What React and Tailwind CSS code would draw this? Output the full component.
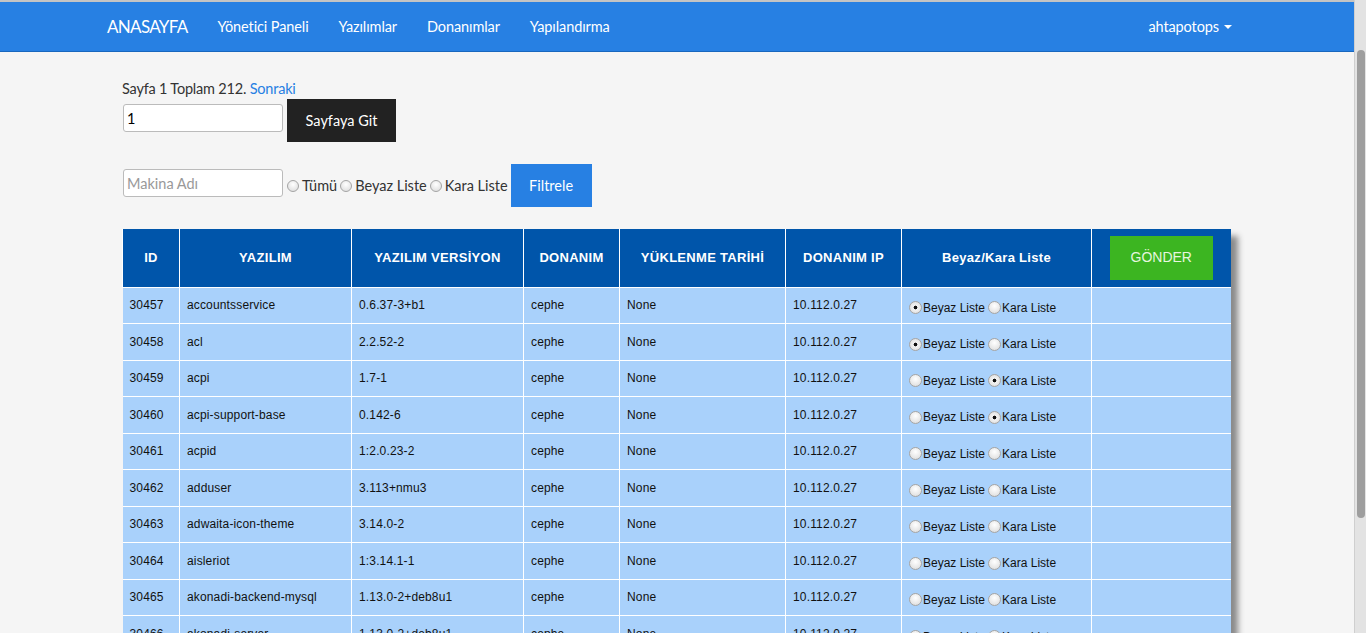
import React from "react";

const ROWS = [
  ["30457", "accountsservice", "0.6.37-3+b1", "beyaz"],
  ["30458", "acl", "2.2.52-2", "beyaz"],
  ["30459", "acpi", "1.7-1", "kara"],
  ["30460", "acpi-support-base", "0.142-6", "kara"],
  ["30461", "acpid", "1:2.0.23-2", ""],
  ["30462", "adduser", "3.113+nmu3", ""],
  ["30463", "adwaita-icon-theme", "3.14.0-2", ""],
  ["30464", "aisleriot", "1:3.14.1-1", ""],
  ["30465", "akonadi-backend-mysql", "1.13.0-2+deb8u1", ""],
  ["30466", "akonadi-server", "1.13.0-2+deb8u1", ""],
];

const HEADERS = [
  ["ID", "w-[57px]"],
  ["YAZILIM", "w-[172px]"],
  ["YAZILIM VERSİYON", "w-[172px]"],
  ["DONANIM", "w-[96px]"],
  ["YÜKLENME TARİHİ", "w-[166px]"],
  ["DONANIM IP", "w-[116px]"],
  ["Beyaz/Kara Liste", "w-[190px]"],
];

function Radio({ checked, name, size = "h-[12px] w-[12px]" }) {
  return (
    <input
      type="radio"
      name={name}
      defaultChecked={checked}
      className={`${size} m-0 shrink-0 appearance-none rounded-full border border-[#a4a4a4] bg-[radial-gradient(circle_at_50%_35%,#ffffff,#d9d9d9)] checked:bg-[radial-gradient(circle,#111_0_1.6px,#f4f4f4_2.2px,#d6d6d6_100%)]`}
    />
  );
}

function NavBar() {
  return (
    <nav className="h-[52px] border-t-2 border-b border-t-[#c4c4c4] border-b-[#1967be] bg-[#2780e3] font-['Lato',sans-serif] text-white">
      <div className="mx-auto flex h-full w-[1170px] items-center justify-between px-[15px]">
        <div className="flex items-center tracking-[-0.1px]">
          <span className="pr-[15px] text-[17px] tracking-[-0.7px]">ANASAYFA</span>
          <a className="px-[15px] text-[14.5px]">Yönetici Paneli</a>
          <a className="px-[15px] text-[14.5px]">Yazılımlar</a>
          <a className="px-[15px] text-[14.5px]">Donanımlar</a>
          <a className="px-[15px] text-[14.5px]">Yapılandırma</a>
        </div>
        <a className="flex items-center gap-[5px] px-[15px] text-[14.5px] tracking-[-0.1px]">
          ahtapotops
          <span className="h-0 w-0 border-x-[4px] border-t-[4px] border-x-transparent border-t-white" />
        </a>
      </div>
    </nav>
  );
}

function Controls() {
  return (
    <div className="font-['Lato',sans-serif] text-[14.5px] text-[#333]">
      <p className="leading-[21px] tracking-[-0.2px]">
        Sayfa 1 Toplam 212. <a className="text-[#2780e3]">Sonraki</a>
      </p>
      <div className="flex items-start gap-[4px]">
        <input
          defaultValue="1"
          className="mt-[5px] ml-[1px] h-[28px] w-[160px] rounded-[3px] border border-[#bbb] bg-white px-[3px] text-[14.5px] text-black outline-none"
        />
        <button className="h-[43px] w-[109px] bg-[#222] text-[14.5px] text-white">Sayfaya Git</button>
      </div>
      <div className="mt-[22px] flex items-start">
        <input
          placeholder="Makina Adı"
          className="mt-[5px] ml-[1px] h-[28px] w-[160px] rounded-[3px] border border-[#bbb] bg-white px-[3px] text-[14.5px] outline-none placeholder:text-[#999]"
        />
        <label className="ml-[4px] flex items-center gap-[3px] self-center">
          <Radio name="f" />
          Tümü
        </label>
        <label className="ml-[3px] flex items-center gap-[3px] self-center">
          <Radio name="f" />
          Beyaz Liste
        </label>
        <label className="ml-[3px] flex items-center gap-[3px] self-center">
          <Radio name="f" />
          Kara Liste
        </label>
        <button className="ml-[3px] h-[43px] w-[81px] bg-[#2780e3] text-[14.5px] text-white">Filtrele</button>
      </div>
    </div>
  );
}

function SoftwareTable() {
  return (
    <table className="mt-[22px] w-[1108px] table-fixed border-collapse font-['Liberation_Sans',Arial,sans-serif] shadow-[7px_7px_6px_#8a8a8a]">
      <thead>
        <tr className="h-[58px] bg-[#0055aa] text-[13px] font-bold tracking-[0.3px] text-white">
          {HEADERS.map(([label, w]) => (
            <th key={label} className={`${w} border-x border-white text-center`}>
              {label}
            </th>
          ))}
          <th className="w-[139px] border-l border-white text-center">
            <button className="h-[44px] w-[103px] bg-[#3cb521] text-[14px] font-normal tracking-normal text-[#e6f6df]">
              GÖNDER
            </button>
          </th>
        </tr>
      </thead>
      <tbody className="text-[12px] tracking-[0.15px] text-[#111]">
        {ROWS.map(([id, name, ver, list]) => (
          <tr key={id} className="h-[36.5px] border-t border-white bg-[#a9d1fb]">
            <td className="border-r border-white px-[7px]">{id}</td>
            <td className="border-r border-white px-[7px]">{name}</td>
            <td className="border-r border-white px-[7px]">{ver}</td>
            <td className="border-r border-white px-[7px]">cephe</td>
            <td className="border-r border-white px-[7px]">None</td>
            <td className="border-r border-white px-[7px]">10.112.0.27</td>
            <td className="border-r border-white px-[7px] pt-[5px]">
              <div className="flex items-center tracking-normal">
                <Radio name={`r${id}`} checked={list === "beyaz"} size="h-[13px] w-[13px]" />
                <span className="ml-[1px]">Beyaz Liste</span>
                <span className="ml-[3px]" />
                <Radio name={`r${id}`} checked={list === "kara"} size="h-[13px] w-[13px]" />
                <span className="ml-[1px]">Kara Liste</span>
              </div>
            </td>
            <td />
          </tr>
        ))}
      </tbody>
    </table>
  );
}

export default function App() {
  return (
    <div className="flex h-[633px] w-full overflow-hidden bg-[#f5f5f5]">
      <div className="min-w-0 flex-1">
        <NavBar />
        <main className="mx-auto w-[1170px] px-[30px] pt-[26px]">
          <Controls />
          <SoftwareTable />
        </main>
      </div>
      <div className="flex w-[12px] shrink-0 justify-center border-l border-[#cfcfcf] bg-[#e3e3e3] pt-[50px]">
        <div className="h-[468px] w-[8px] rounded-[4px] bg-[#9e9e9e]" />
      </div>
    </div>
  );
}
